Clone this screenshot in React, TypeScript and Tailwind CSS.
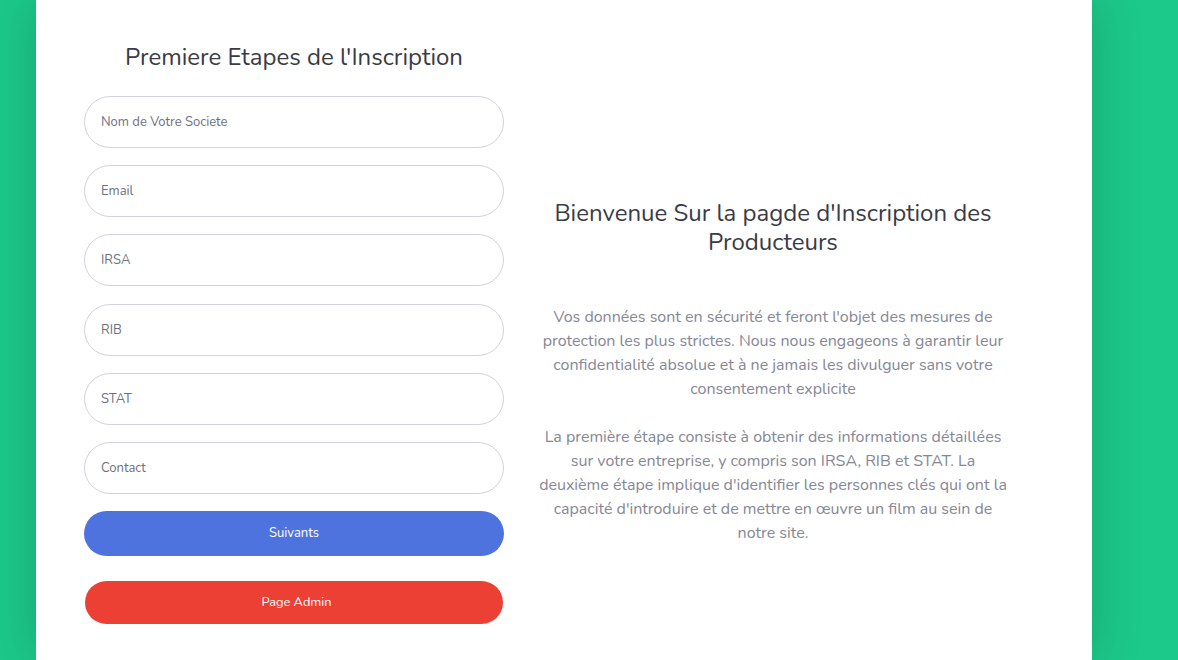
import React from "react";

const font = { fontFamily: "Nunito, Lato, 'Noto Sans', sans-serif" };

function Field({ placeholder }: { placeholder: string }) {
  return (
    <input
      placeholder={placeholder}
      className="block w-full h-[52px] rounded-full border border-[#d1d3e2] bg-white px-4 text-[13px] text-[#6e707e] placeholder:text-[#6e707e] outline-none"
    />
  );
}

export default function App() {
  return (
    <div className="w-[1178px] h-[660px] overflow-hidden bg-[#1cc88a] pl-[36px]" style={font}>
      <div className="w-[1056px] h-[660px] bg-white shadow-[0_0_48px_rgba(0,0,0,0.18)] flex">
        <div className="ml-[48px] w-[420px] pt-[42px]">
          <h1 className="h-[30px] leading-[30px] text-center text-[24px] text-[#3a3b45] font-normal mb-[24px]">
            Premiere Etapes de l'Inscription
          </h1>
          <div className="flex flex-col gap-[17.2px]">
            <Field placeholder="Nom de Votre Societe" />
            <Field placeholder="Email" />
            <Field placeholder="IRSA" />
            <Field placeholder="RIB" />
            <Field placeholder="STAT" />
            <Field placeholder="Contact" />
            <button className="h-[45px] w-full rounded-full bg-[#4e73df] text-white text-[13px]">
              Suivants
            </button>
          </div>
          <div className="px-px mt-[25px]">
            <button className="h-[43px] w-full rounded-full bg-[#ec4034] text-white text-[12.8px] pl-[5px]">
              Page Admin
            </button>
          </div>
        </div>
        <div className="ml-[24px] w-[490px] pt-[199px] text-center">
          <h2 className="text-[24px] leading-[29px] text-[#3a3b45] font-normal whitespace-nowrap">
            Bienvenue Sur la pagde d'Inscription des
            <br />
            Producteurs
          </h2>
          <div className="mt-[48px] text-[16px] leading-[24px] text-[#858796] whitespace-nowrap">
            <p>
              Vos données sont en sécurité et feront l'objet des mesures de
              <br />
              protection les plus strictes. Nous nous engageons à garantir leur
              <br />
              confidentialité absolue et à ne jamais les divulguer sans votre
              <br />
              consentement explicite
            </p>
            <p className="mt-[24px]">
              La première étape consiste à obtenir des informations détaillées
              <br />
              sur votre entreprise, y compris son IRSA, RIB et STAT. La
              <br />
              deuxième étape implique d'identifier les personnes clés qui ont la
              <br />
              capacité d'introduire et de mettre en œuvre un film au sein de
              <br />
              notre site.
            </p>
          </div>
        </div>
      </div>
    </div>
  );
}
